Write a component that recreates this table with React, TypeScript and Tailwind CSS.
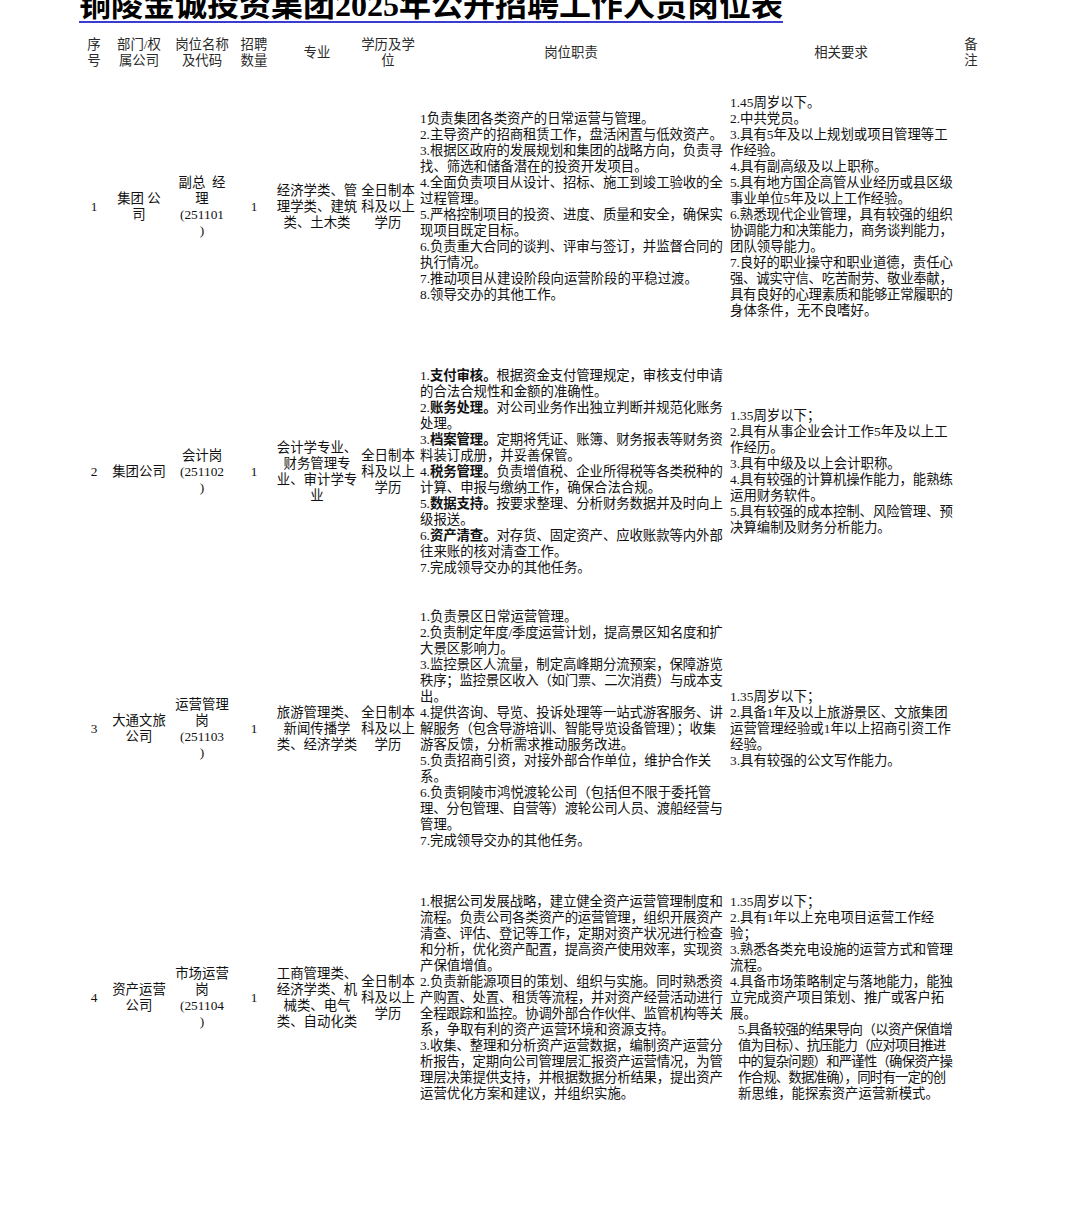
import React from "react";

// widths used to estimate line length (serif digits, CJK fallback)
const FONT = 13.4;
const DUTY_W = 303;
const REQ_W = 223;

function measure(s: string) {
  let w = 0;
  for (const ch of s) {
    if (/[0-9]/.test(ch)) w += FONT * 0.5;
    else if (ch === ".") w += FONT * 0.25;
    else if (ch === "/") w += FONT * 0.28;
    else if (ch === " ") w += FONT * 0.25;
    else if (/[A-Za-z()]/.test(ch)) w += FONT * 0.45;
    else w += FONT;
  }
  return w;
}

// letter spacing so a line ends on the given width
function fitStyle(plain: string, target: number): React.CSSProperties {
  const n = [...plain].length;
  const w = measure(plain);
  return { letterSpacing: `${(target - w) / Math.max(n - 1, 1)}px` };
}

function Rich({ text }: { text: string }) {
  const parts = text.split("**");
  return (
    <>
      {parts.map((p, i) =>
        i % 2 === 1 ? (
          <span key={i} className="font-bold">
            {p}
          </span>
        ) : (
          <React.Fragment key={i}>{p}</React.Fragment>
        )
      )}
    </>
  );
}

function DutyText({ paras }: { paras: string[][] }) {
  return (
    <div className="w-[306px]">
      {paras.map((lines, pi) =>
        lines.map((line, li) => {
          const last = li === lines.length - 1;
          const plain = line.replace(/\*\*/g, "");
          const w = measure(plain);
          let style: React.CSSProperties | undefined;
          if ((!last && w >= 292) || w > DUTY_W) style = fitStyle(plain, DUTY_W);
          return (
            <div key={`${pi}-${li}`} className="whitespace-nowrap" style={style}>
              <Rich text={line} />
            </div>
          );
        })
      )}
    </div>
  );
}

function ReqText({ lines, indentFrom }: { lines: string[]; indentFrom?: number }) {
  return (
    <div>
      {lines.map((l, i) => {
        const indent = indentFrom !== undefined && i >= indentFrom;
        const avail = indent ? REQ_W - 8 : REQ_W;
        const style = measure(l) > avail ? fitStyle(l, avail) : undefined;
        return (
          <div key={i} className={`whitespace-nowrap ${indent ? "pl-2" : ""}`} style={style}>
            {l}
          </div>
        );
      })}
    </div>
  );
}

function Stack({ lines }: { lines: string[] }) {
  return (
    <div className="flex flex-col items-center text-center">
      {lines.map((l, i) => (
        <div key={i} className="whitespace-pre">
          {l}
        </div>
      ))}
    </div>
  );
}

interface Job {
  no: string;
  dept: string[];
  post: string[];
  count: string;
  major: string[];
  edu: string[];
  duties: string[][];
  reqs: string[];
  reqIndent?: number;
  h: string;
}

const EDU = ["全日制本", "科及以上", "学历"];

const jobs: Job[] = [
  {
    no: "1",
    dept: ["集团 公", "司"],
    post: ["副总  经", "理", "(251101", ")"],
    count: "1",
    major: ["经济学类、管", "理学类、建筑", "类、土木类"],
    edu: EDU,
    h: "h-[268px]",
    duties: [
      ["1负责集团各类资产的日常运营与管理。"],
      ["2.主导资产的招商租赁工作，盘活闲置与低效资产。"],
      ["3.根据区政府的发展规划和集团的战略方向，负责寻", "找、筛选和储备潜在的投资开发项目。"],
      ["4.全面负责项目从设计、招标、施工到竣工验收的全", "过程管理。"],
      ["5.严格控制项目的投资、进度、质量和安全，确保实", "现项目既定目标。"],
      ["6.负责重大合同的谈判、评审与签订，并监督合同的", "执行情况。"],
      ["7.推动项目从建设阶段向运营阶段的平稳过渡。"],
      ["8.领导交办的其他工作。"],
    ],
    reqs: [
      "1.45周岁以下。",
      "2.中共党员。",
      "3.具有5年及以上规划或项目管理等工",
      "作经验。",
      "4.具有副高级及以上职称。",
      "5.具有地方国企高管从业经历或县区级",
      "事业单位5年及以上工作经验。",
      "6.熟悉现代企业管理，具有较强的组织",
      "协调能力和决策能力，商务谈判能力，",
      "团队领导能力。",
      "7.良好的职业操守和职业道德，责任心",
      "强、诚实守信、吃苦耐劳、敬业奉献，",
      "具有良好的心理素质和能够正常履职的",
      "身体条件，无不良嗜好。",
    ],
  },
  {
    no: "2",
    dept: ["集团公司"],
    post: ["会计岗", "(251102", ")"],
    count: "1",
    major: ["会计学专业、", "财务管理专", "业、审计学专", "业"],
    edu: EDU,
    h: "h-[262px]",
    duties: [
      ["1.**支付审核。**根据资金支付管理规定，审核支付申请", "的合法合规性和金额的准确性。"],
      ["2.**账务处理。**对公司业务作出独立判断并规范化账务", "处理。"],
      ["3.**档案管理。**定期将凭证、账簿、财务报表等财务资", "料装订成册，并妥善保管。"],
      ["4.**税务管理。**负责增值税、企业所得税等各类税种的", "计算、申报与缴纳工作，确保合法合规。"],
      ["5.**数据支持。**按要求整理、分析财务数据并及时向上", "级报送。"],
      ["6.**资产清查。**对存货、固定资产、应收账款等内外部", "往来账的核对清查工作。"],
      ["7.完成领导交办的其他任务。"],
    ],
    reqs: [
      "1.35周岁以下；",
      "2.具有从事企业会计工作5年及以上工",
      "作经历。",
      "3.具有中级及以上会计职称。",
      "4.具有较强的计算机操作能力，能熟练",
      "运用财务软件。",
      "5.具有较强的成本控制、风险管理、预",
      "决算编制及财务分析能力。",
    ],
  },
  {
    no: "3",
    dept: ["大通文旅", "公司"],
    post: ["运营管理", "岗", "(251103", ")"],
    count: "1",
    major: ["旅游管理类、", "新闻传播学", "类、经济学类"],
    edu: EDU,
    h: "h-[252px]",
    duties: [
      ["1.负责景区日常运营管理。"],
      ["2.负责制定年度/季度运营计划，提高景区知名度和扩", "大景区影响力。"],
      ["3.监控景区人流量，制定高峰期分流预案，保障游览", "秩序；监控景区收入（如门票、二次消费）与成本支", "出。"],
      ["4.提供咨询、导览、投诉处理等一站式游客服务、讲", "解服务（包含导游培训、智能导览设备管理）；收集", "游客反馈，分析需求推动服务改进。"],
      ["5.负责招商引资，对接外部合作单位，维护合作关", "系。"],
      ["6.负责铜陵市鸿悦渡轮公司（包括但不限于委托管", "理、分包管理、自营等）渡轮公司人员、渡船经营与", "管理。"],
      ["7.完成领导交办的其他任务。"],
    ],
    reqs: [
      "1.35周岁以下；",
      "2.具备1年及以上旅游景区、文旅集团",
      "运营管理经验或1年以上招商引资工作",
      "经验。",
      "3.具有较强的公文写作能力。",
    ],
  },
  {
    no: "4",
    dept: ["资产运营", "公司"],
    post: ["市场运营", "岗", "(251104", ")"],
    count: "1",
    major: ["工商管理类、", "经济学类、机", "械类、电气", "类、自动化类"],
    edu: EDU,
    h: "h-[286px]",
    duties: [
      [
        "1.根据公司发展战略，建立健全资产运营管理制度和",
        "流程。负责公司各类资产的运营管理，组织开展资产",
        "清查、评估、登记等工作，定期对资产状况进行检查",
        "和分析，优化资产配置，提高资产使用效率，实现资",
        "产保值增值。",
      ],
      [
        "2.负责新能源项目的策划、组织与实施。同时熟悉资",
        "产购置、处置、租赁等流程，并对资产经营活动进行",
        "全程跟踪和监控。协调外部合作伙伴、监管机构等关",
        "系，争取有利的资产运营环境和资源支持。",
      ],
      [
        "3.收集、整理和分析资产运营数据，编制资产运营分",
        "析报告，定期向公司管理层汇报资产运营情况，为管",
        "理层决策提供支持，并根据数据分析结果，提出资产",
        "运营优化方案和建议，并组织实施。",
      ],
    ],
    reqs: [
      "1.35周岁以下；",
      "2.具有1年以上充电项目运营工作经",
      "验；",
      "3.熟悉各类充电设施的运营方式和管理",
      "流程。",
      "4.具备市场策略制定与落地能力，能独",
      "立完成资产项目策划、推广或客户拓",
      "展。",
      "5.具备较强的结果导向（以资产保值增",
      "值为目标）、抗压能力（应对项目推进",
      "中的复杂问题）和严谨性（确保资产操",
      "作合规、数据准确），同时有一定的创",
      "新思维，能探索资产运营新模式。",
    ],
    reqIndent: 8,
  },
];

const COLS = "grid-cols-[28px_62px_64px_40px_86px_56px_310px_230px_30px]";

export default function App() {
  return (
    <div className="min-h-[1230px] w-[1080px] overflow-hidden bg-white font-['Liberation_Serif','Noto_Sans_CJK_SC',serif] text-[13.4px] leading-[16px] text-[#111]">
      <div className="ml-[79px] -mt-[11px] inline-block border-b-2 border-[#3b3bd0] text-[32px] font-bold leading-[32px] text-black">
        铜陵金诚投资集团2025年公开招聘工作人员岗位表
      </div>

      {/* header */}
      <div className={`ml-[80px] mt-[12px] grid h-[36px] ${COLS} items-center text-[#2a2a2a]`}>
        <Stack lines={["序", "号"]} />
        <Stack lines={["部门/权", "属公司"]} />
        <Stack lines={["岗位名称", "及代码"]} />
        <Stack lines={["招聘", "数量"]} />
        <Stack lines={["专业"]} />
        <Stack lines={["学历及学", "位"]} />
        <Stack lines={["岗位职责"]} />
        <Stack lines={["相关要求"]} />
        <Stack lines={["备", "注"]} />
      </div>

      <div className="pt-[2px]">
        {jobs.map((j) => (
          <div key={j.no} className={`ml-[80px] grid ${j.h} ${COLS} items-center`}>
            <Stack lines={[j.no]} />
            <Stack lines={j.dept} />
            <Stack lines={j.post} />
            <Stack lines={[j.count]} />
            <Stack lines={j.major} />
            <Stack lines={j.edu} />
            <div className="pl-[4px]">
              <DutyText paras={j.duties} />
            </div>
            <div className="pl-[4px]">
              <ReqText lines={j.reqs} indentFrom={j.reqIndent} />
            </div>
            <div />
          </div>
        ))}
      </div>
    </div>
  );
}
